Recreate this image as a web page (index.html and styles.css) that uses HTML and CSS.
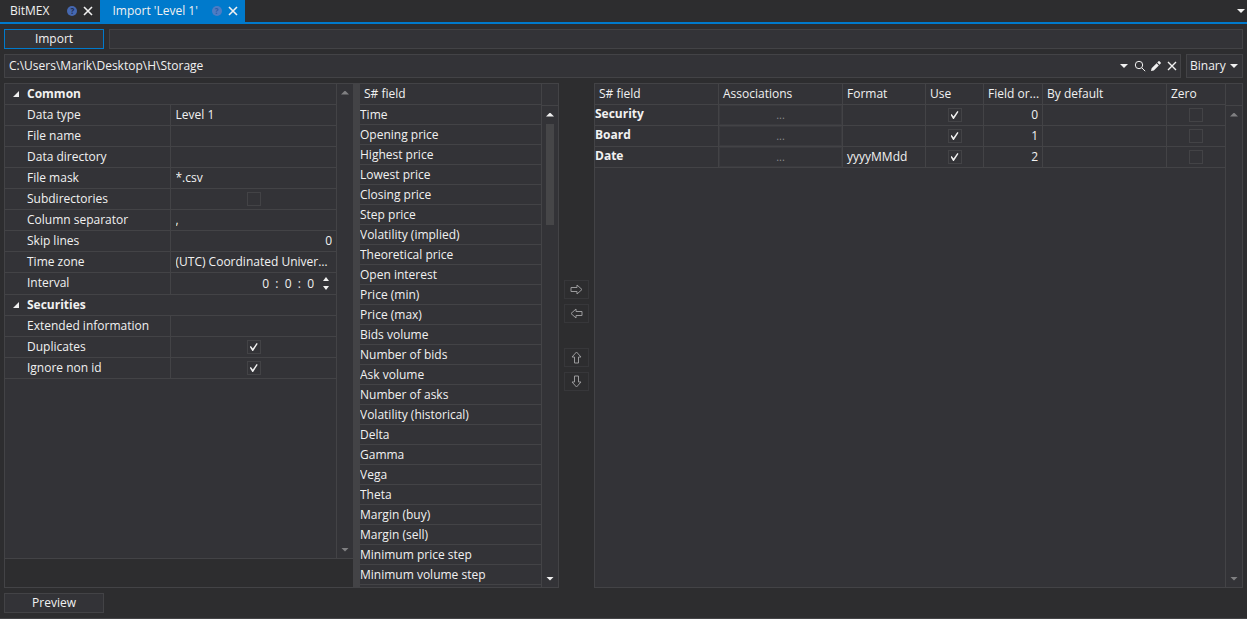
FILE: index.html
```html
<!DOCTYPE html>
<html lang="en">
<head>
    <meta charset="UTF-8">
    <meta name="viewport" content="width=device-width, initial-scale=1.0">
    <title>Import 'Level 1'</title>
    <link rel="stylesheet" href="styles.css">
</head>
<body>
    <nav class="tabs">
        <div class="tab">
            <a href="#bitmex">BitMEX</a>
            <button class="help" type="button" aria-label="Help">?</button>
            <button class="close" type="button" aria-label="Close"><svg width="10" height="10" viewBox="0 0 10 10"><path d="M1 1l8 8M9 1l-8 8"/></svg></button>
        </div>
        <div class="tab active">
            <a href="#import">Import 'Level 1'</a>
            <button class="help" type="button" aria-label="Help">?</button>
            <button class="close" type="button" aria-label="Close"><svg width="10" height="10" viewBox="0 0 10 10"><path d="M1 1l8 8M9 1l-8 8"/></svg></button>
        </div>
        <button class="tab-menu" type="button" aria-label="Tabs"><i class="arrow down"></i></button>
    </nav>

    <main id="import">
        <div class="bar">
            <button class="btn primary" type="button">Import</button>
            <div class="progress"></div>
        </div>

        <div class="bar path-bar">
            <div class="path">
                <input type="text" aria-label="Storage path" value="C:\Users\Marik\Desktop\H\Storage">
                <button type="button" aria-label="History"><i class="arrow down"></i></button>
                <button type="button" aria-label="Search"><svg width="12" height="12" viewBox="0 0 12 12"><circle cx="5" cy="5" r="3.7"/><path d="M7.8 7.8l3.4 3.4"/></svg></button>
                <button type="button" aria-label="Edit"><svg width="12" height="12" viewBox="0 0 12 12"><path class="fill" d="M1 11l.6-2.800 5-5 2.200 2.200-5 5zM7.300 2.500l1.200-1.200q.5-.5 1 0l1.200 1.200q.5.5 0 1L9.500 4.700z"/></svg></button>
                <button type="button" aria-label="Clear"><svg class="bold" width="12" height="12" viewBox="0 0 12 12"><path d="M2 2l8 8M10 2l-8 8"/></svg></button>
            </div>
            <div class="format">
                <select aria-label="Storage format"><option>Binary</option><option>CSV</option></select>
                <i class="arrow down"></i>
            </div>
        </div>

        <div class="work">
            <section class="left">
                <div class="panel-body">
                    <form class="props">
                        <h2><i class="expander"></i>Common</h2>
                        <div class="prop"><label for="data-type">Data type</label><div><input type="text" id="data-type" value="Level 1"></div></div>
                        <div class="prop"><label for="file-name">File name</label><div><input type="text" id="file-name"></div></div>
                        <div class="prop"><label for="data-dir">Data directory</label><div><input type="text" id="data-dir"></div></div>
                        <div class="prop"><label for="mask">File mask</label><div><input type="text" id="mask" value="*.csv"></div></div>
                        <div class="prop"><label for="subdirs">Subdirectories</label><div><input type="checkbox" id="subdirs"></div></div>
                        <div class="prop"><label for="separator">Column separator</label><div><input type="text" id="separator" value=","></div></div>
                        <div class="prop"><label for="skip">Skip lines</label><div><input type="text" class="num" id="skip" value="0"></div></div>
                        <div class="prop"><label for="zone">Time zone</label><div><select id="zone"><option>(UTC) Coordinated Universal Time</option></select></div></div>
                        <div class="prop tall"><label for="interval">Interval</label><div>
                            <input type="text" class="num" id="interval" value="0  :  0  :  0">
                            <span class="spin">
                                <button type="button" aria-label="Increase"><i class="arrow up"></i></button>
                                <button type="button" aria-label="Decrease"><i class="arrow down"></i></button>
                            </span>
                        </div></div>
                        <h2><i class="expander"></i>Securities</h2>
                        <div class="prop"><label for="extended">Extended information</label><div><input type="text" id="extended"></div></div>
                        <div class="prop"><label for="duplicates">Duplicates</label><div><input type="checkbox" id="duplicates" checked></div></div>
                        <div class="prop"><label for="ignore">Ignore non id</label><div><input type="checkbox" id="ignore" checked></div></div>
                    </form>
                    <div class="scroll disabled">
                        <button type="button" aria-label="Scroll up"><i class="arrow up"></i></button>
                        <button type="button" aria-label="Scroll down"><i class="arrow down"></i></button>
                    </div>
                </div>
                <div class="description"></div>
            </section>

            <div class="splitter"></div>

            <section class="fields">
                <div class="list">
                    <table>
                        <thead><tr><th>S# field</th></tr></thead>
                        <tbody>
                            <tr><td>Time</td></tr>
                            <tr><td>Opening price</td></tr>
                            <tr><td>Highest price</td></tr>
                            <tr><td>Lowest price</td></tr>
                            <tr><td>Closing price</td></tr>
                            <tr><td>Step price</td></tr>
                            <tr><td>Volatility (implied)</td></tr>
                            <tr><td>Theoretical price</td></tr>
                            <tr><td>Open interest</td></tr>
                            <tr><td>Price (min)</td></tr>
                            <tr><td>Price (max)</td></tr>
                            <tr><td>Bids volume</td></tr>
                            <tr><td>Number of bids</td></tr>
                            <tr><td>Ask volume</td></tr>
                            <tr><td>Number of asks</td></tr>
                            <tr><td>Volatility (historical)</td></tr>
                            <tr><td>Delta</td></tr>
                            <tr><td>Gamma</td></tr>
                            <tr><td>Vega</td></tr>
                            <tr><td>Theta</td></tr>
                            <tr><td>Margin (buy)</td></tr>
                            <tr><td>Margin (sell)</td></tr>
                            <tr><td>Minimum price step</td></tr>
                            <tr><td>Minimum volume step</td></tr>
                        </tbody>
                    </table>
                </div>
                <div class="scroll with-head">
                    <button type="button" aria-label="Scroll up"><i class="arrow up"></i></button>
                    <div class="thumb"></div>
                    <button type="button" aria-label="Scroll down"><i class="arrow down"></i></button>
                </div>
            </section>

            <div class="move">
                <button type="button" aria-label="Add field"><svg width="13" height="11" viewBox="0 0 13 11"><path d="M1 3.500h6v-2.500l5 4.500-5 4.500v-2.500h-6z"/></svg></button>
                <button type="button" aria-label="Remove field"><svg width="13" height="11" viewBox="0 0 13 11"><path d="M12 3.500h-6v-2.500l-5 4.500 5 4.500v-2.500h6z"/></svg></button>
                <button class="group" type="button" aria-label="Move up"><svg width="11" height="13" viewBox="0 0 11 13"><path d="M3.500 12v-6h-2.500l4.500-5 4.500 5h-2.500v6z"/></svg></button>
                <button type="button" aria-label="Move down"><svg width="11" height="13" viewBox="0 0 11 13"><path d="M3.500 1v6h-2.500l4.500 5 4.500-5h-2.500v-6z"/></svg></button>
            </div>

            <section class="fields mapping">
                <div class="list">
                    <table>
                        <colgroup>
                            <col class="w-field"><col class="w-field"><col class="w-format"><col class="w-use"><col class="w-order"><col><col class="w-zero">
                        </colgroup>
                        <thead>
                            <tr><th>S# field</th><th>Associations</th><th>Format</th><th>Use</th><th>Field or...</th><th>By default</th><th>Zero</th></tr>
                        </thead>
                        <tbody>
                            <tr>
                                <td class="name">Security</td>
                                <td><button class="dots" type="button">...</button></td>
                                <td></td>
                                <td><input type="checkbox" aria-label="Use Security" checked></td>
                                <td class="num">0</td>
                                <td></td>
                                <td><input type="checkbox" aria-label="Zero Security"></td>
                            </tr>
                            <tr>
                                <td class="name">Board</td>
                                <td><button class="dots" type="button">...</button></td>
                                <td></td>
                                <td><input type="checkbox" aria-label="Use Board" checked></td>
                                <td class="num">1</td>
                                <td></td>
                                <td><input type="checkbox" aria-label="Zero Board"></td>
                            </tr>
                            <tr>
                                <td class="name">Date</td>
                                <td><button class="dots" type="button">...</button></td>
                                <td class="text">yyyyMMdd</td>
                                <td><input type="checkbox" aria-label="Use Date" checked></td>
                                <td class="num">2</td>
                                <td></td>
                                <td><input type="checkbox" aria-label="Zero Date"></td>
                            </tr>
                        </tbody>
                    </table>
                </div>
                <div class="scroll with-head disabled">
                    <button type="button" aria-label="Scroll up"><i class="arrow up"></i></button>
                    <button type="button" aria-label="Scroll down"><i class="arrow down"></i></button>
                </div>
            </section>
        </div>

        <div class="bar">
            <button class="btn" type="button">Preview</button>
        </div>
    </main>
</body>
</html>
```

FILE: styles.css
```css
:root {
    --bg: #2d2d2f;
    --panel: #333337;
    --line: #434346;
    --text: #f1f1f1;
    --accent: #007acc;
}

* { box-sizing: border-box; }

body {
    margin: 0;
    height: 100vh;
    display: flex;
    flex-direction: column;
    background: var(--bg);
    border-bottom: 1px solid var(--line);
    color: var(--text);
    font: 12px/20px "Open Sans", "Noto Sans", sans-serif;
}

button, input, select { font: inherit; color: inherit; background: none; border: 0; margin: 0; padding: 0; outline: 0; }
button { display: flex; align-items: center; justify-content: center; cursor: pointer; }
select { appearance: none; }
svg { display: block; fill: none; stroke: var(--text); }
svg .fill { fill: var(--text); stroke: none; }
svg.bold { stroke-width: 1.4; }

.arrow { display: block; width: 8px; height: 4px; background: var(--text); }
.arrow.down { clip-path: polygon(0 0, 100% 0, 50% 100%); }
.arrow.up { clip-path: polygon(50% 0, 100% 100%, 0 100%); }

/* tabs */
.tabs { display: flex; flex: none; height: 24px; border-bottom: 2px solid var(--accent); }
.tab { display: flex; align-items: center; padding: 0 7px 0 10px; }
.tab a { color: inherit; text-decoration: none; line-height: 22px; }
.tab.active { background: var(--accent); padding: 0 7px 0 12px; }
.help { width: 10px; height: 10px; margin: 0 6px 0 18px; border-radius: 50%; background: #4668b0; color: #1e2c50; font-size: 8px; font-weight: bold; line-height: 10px; }
.tab.active .help { margin-left: 14px; background: #4d7cc4; color: #2a5da8; }
.close svg { stroke-width: 1.6; }
.tab-menu { margin-left: auto; padding: 0 2px; }

/* toolbars */
main { flex: 1; min-height: 0; display: flex; flex-direction: column; gap: 5px; padding: 5px 4px; }
.bar { display: flex; gap: 5px; flex: none; height: 20px; }
.path-bar { height: 24px; }
.btn { width: 100px; background: var(--panel); border: 1px solid var(--line); }
.btn.primary { border-color: var(--accent); }
.progress { flex: 1; background: var(--panel); border: 1px solid var(--line); }
.path { flex: 1; display: flex; background: var(--panel); border: 1px solid var(--line); padding-left: 4px; }
.path input { flex: 1; min-width: 0; }
.path button { width: 16px; }
.format { display: flex; align-items: center; width: 57px; background: var(--panel); border: 1px solid var(--line); padding: 0 4px 0 3px; }
.format select { flex: 1; min-width: 0; height: 20px; }

/* work area */
.work { flex: 1; min-height: 0; display: flex; }
.left { width: 349px; display: flex; flex-direction: column; border: 1px solid var(--line); border-right: 0; }
.panel-body { flex: 1; min-height: 0; display: flex; background: var(--panel); }
.description { height: 29px; border-top: 1px solid var(--line); }
.splitter { width: 7px; background: var(--line); cursor: col-resize; }

.props { flex: 1; min-width: 0; overflow: hidden; }
.props h2 { display: flex; align-items: center; height: 21px; margin: 0; border-bottom: 1px solid var(--line); font-size: 12px; }
.expander { width: 6px; height: 6px; margin: 0 8px; background: var(--text); clip-path: polygon(100% 0, 100% 100%, 0 100%); }
.prop { display: grid; grid-template-columns: 1fr 1fr; height: 21px; border-bottom: 1px solid var(--line); }
.prop.tall { height: 22px; }
.prop label { padding-left: 22px; border-right: 1px solid var(--line); white-space: nowrap; }
.prop div { display: flex; align-items: center; padding: 0 4px 0 5px; min-width: 0; }
.prop input[type=text], .prop select { flex: 1; min-width: 0; width: 100%; height: 20px; text-overflow: ellipsis; white-space: pre; overflow: hidden; }
.num { text-align: right; }
.spin { display: flex; flex-direction: column; gap: 5px; width: 6px; margin: 0 3px 0 9px; }
.spin .arrow { width: 6px; height: 4px; }

input[type=checkbox] { appearance: none; display: block; width: 14px; height: 14px; margin: 0 auto; border: 1px solid var(--line); }
input[type=checkbox]:checked::before {
    content: "";
    display: block;
    width: 8px;
    height: 8px;
    margin: 2px;
    background: var(--text);
    clip-path: polygon(0 48%, 14% 38%, 38% 68%, 86% 0, 100% 10%, 42% 100%, 32% 100%);
}

/* scroll bars */
.scroll { display: flex; flex-direction: column; align-items: center; flex: none; width: 17px; border-left: 1px solid var(--line); }
.scroll.with-head::before { content: ""; flex: none; width: 100%; height: 21px; border-bottom: 1px solid var(--line); }
.scroll button { flex: none; width: 16px; height: 17px; }
.scroll button:last-child { margin-top: auto; }
.scroll.disabled .arrow { background: #808082; }
.thumb { flex: none; width: 8px; height: 20%; margin-top: 1px; background: #464648; }

/* tables */
.fields { display: flex; width: 199px; background: var(--panel); border: 1px solid var(--line); border-left: 0; }
.list { flex: 1; min-width: 0; overflow: hidden; }
table { width: 100%; table-layout: fixed; border-spacing: 0; }
th { height: 21px; padding: 0 0 0 4px; border-bottom: 1px solid var(--line); font-weight: normal; text-align: left; white-space: nowrap; }
td { height: 20px; padding: 0; border-bottom: 1px solid var(--line); line-height: 19px; white-space: nowrap; }

.mapping { flex: 1; width: auto; min-width: 0; border-left: 1px solid var(--line); }
.mapping td { height: 21px; line-height: 20px; }
.mapping th:not(:last-child), .mapping td:not(:last-child) { border-right: 1px solid var(--line); }
.mapping .name { font-weight: bold; line-height: 18px; vertical-align: top; }
.mapping .text { padding: 0 4px; }
.mapping .num { padding-right: 4px; }
.dots { width: 100%; height: 20px; border: 1px solid #3a3a3e; color: #8a8a8c; font-size: 11px; }
.w-field { width: 124px; }
.w-format { width: 83px; }
.w-use { width: 58px; }
.w-order { width: 59px; }
.w-zero { width: 58px; }

/* move buttons */
.move { display: flex; flex-direction: column; align-items: center; justify-content: center; gap: 5px; width: 35px; }
.move button { width: 25px; height: 19px; border: 1px solid #37373a; }
.move .group { margin-top: 20px; }
.move svg { stroke: #9a9a9c; }
```
